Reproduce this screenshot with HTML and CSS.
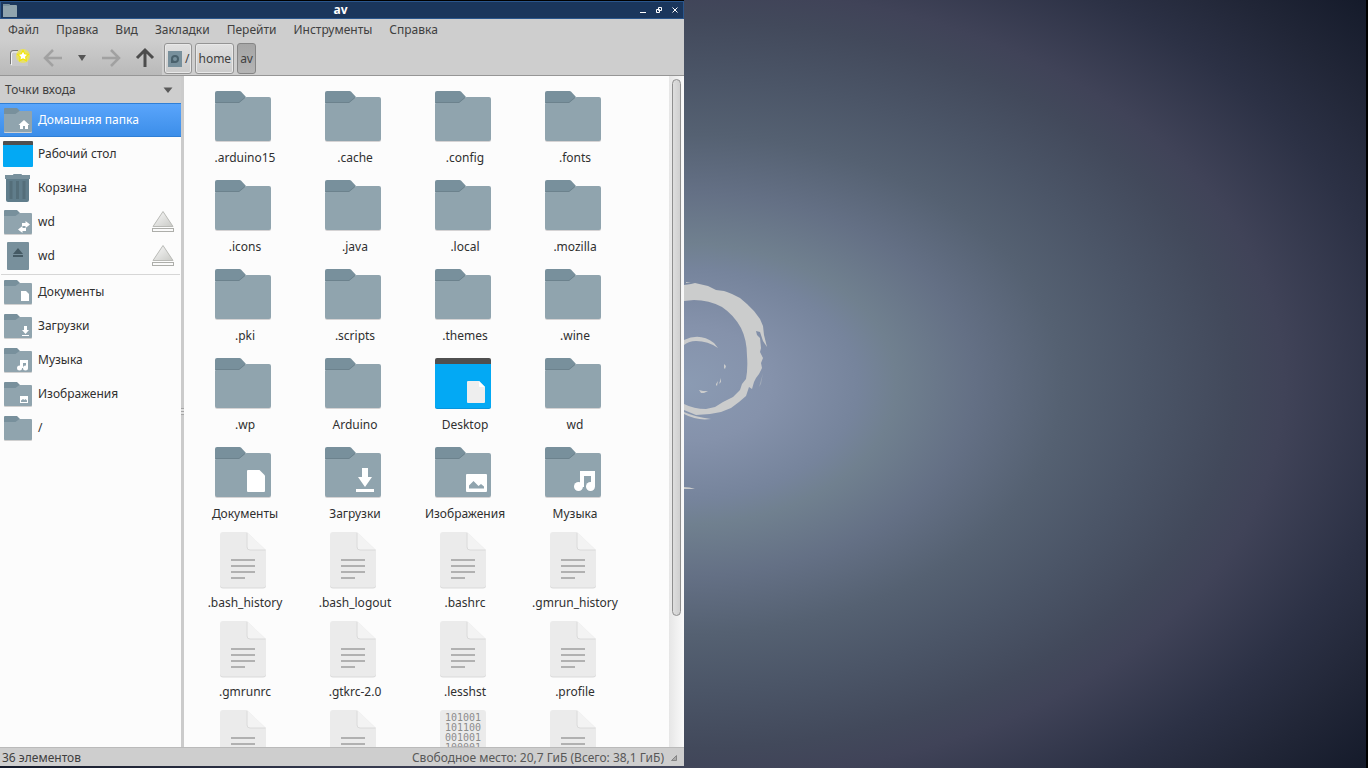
FILE: index.html
```
<!DOCTYPE html>
<html lang="ru">
<head>
<meta charset="utf-8">
<title>av</title>
<link rel="stylesheet" href="styles.css">
</head>
<body>
<svg class="defs" aria-hidden="true">
  <defs>
    <linearGradient id="metal" x1="0" y1="0" x2="1" y2="1"><stop offset="0" stop-color="#fafafa"/><stop offset="1" stop-color="#c9cac6"/></linearGradient>
    <symbol id="folder" viewBox="0 0 68 64">
      <path d="M4 54v2a2 2 0 0 0 2 2h52a2 2 0 0 0 2-2V54z" fill="#d5d3d4"/>
      <path d="M4 9a2 2 0 0 1 2-2h22.500q1 0 1.700.7L35 13l-4 6H4z" fill="#78909c"/>
      <path d="M4 20q0-1.500 1.500-1.500H28q1 0 1.700-.7l4.300-4.100q.7-.7 1.700-.7H58a2 2 0 0 1 2 2v40a2 2 0 0 1-2 2H6a2 2 0 0 1-2-2z" fill="#90a4ae"/>
      <path d="M4.500 18.500H28l6-5" fill="none" stroke="#6c828d"/>
    </symbol>
    <symbol id="file" viewBox="0 0 68 64">
      <path d="M9 55v1.500a3 3 0 0 0 3 3h40a3 3 0 0 0 3-3V21H36z" fill="#d9d9d9"/>
      <path d="M9 6a3 3 0 0 1 3-3h24l19 18v34.500a3 3 0 0 1-3 3H12a3 3 0 0 1-3-3z" fill="#ebebeb"/>
      <path d="M36 3l18.500 18H39a3 3 0 0 1-3-3z" fill="#f3f3f3"/>
      <path d="M36 4v14a3 3 0 0 0 3 3h15.500" fill="none" stroke="#dadada"/>
      <path d="M20 31h24M20 37h24M20 43h24M20 49h14" stroke="#b1b1b1" stroke-width="2"/>
    </symbol>
    <symbol id="binary" viewBox="0 0 68 64">
      <rect x="9" y="3" width="46" height="57" rx="3" fill="#ebebeb"/>
      <g class="digits" text-anchor="middle"><text x="32" y="14">101001</text><text x="32" y="24">101100</text><text x="32" y="34">001001</text><text x="32" y="44">100001</text></g>
    </symbol>
    <symbol id="desktop" viewBox="0 0 68 64">
      <path d="M4 54v2a2 2 0 0 0 2 2h52a2 2 0 0 0 2-2V54z" fill="#0794dc"/>
      <path d="M4 12h56v43a2 2 0 0 1-2 2H6a2 2 0 0 1-2-2z" fill="#03a9f4"/>
      <path d="M4 13V9a2 2 0 0 1 2-2h52a2 2 0 0 1 2 2v4z" fill="#4f4f4f"/>
      <path d="M36 31a1 1 0 0 1 1-1h11l6 6v15a1 1 0 0 1-1 1H37a1 1 0 0 1-1-1z" fill="#eee"/><path d="M48 30l6 6h-5q-1 0-1-1z" fill="#fff"/>
    </symbol>
    <symbol id="docs" viewBox="0 0 68 64"><use href="#folder"/><path d="M36 31a1 1 0 0 1 1-1h11.500l5.500 5.500V51a1 1 0 0 1-1 1H37a1 1 0 0 1-1-1z" fill="#fff"/></symbol>
    <symbol id="downloads" viewBox="0 0 68 64"><use href="#folder"/><path d="M41 28h6v9h4l-7 10-7-10h4zM35 49h18v3H35z" fill="#fff"/></symbol>
    <symbol id="pictures" viewBox="0 0 68 64"><use href="#folder"/><rect x="35" y="34" width="21" height="18" rx="1" fill="#fff"/><path d="M38 48.500v-3l4.500-4.500 5 5 2.500-2 3 2.500v2z" fill="#90a4ae"/></symbol>
    <symbol id="music" viewBox="0 0 68 64"><use href="#folder"/><path d="M39 31h15v15.500h-4V36h-7v11h-4z" fill="#fff"/><circle cx="37.500" cy="46.500" r="4.500" fill="#fff"/><circle cx="49.500" cy="46.500" r="4.500" fill="#fff"/></symbol>
    <symbol id="s-folder" viewBox="0 0 32 32">
      <path d="M2 27v1a1 1 0 0 0 1 1h26a1 1 0 0 0 1-1v-1z" fill="#d0d0d0"/>
      <path d="M2 5a1 1 0 0 1 1-1h12l3 3v3H2z" fill="#78909c"/>
      <path d="M2 10h11.500l4-3H29a1 1 0 0 1 1 1v19a1 1 0 0 1-1 1H3a1 1 0 0 1-1-1z" fill="#90a4ae"/>
    </symbol>
    <symbol id="s-home" viewBox="0 0 32 32"><use href="#s-folder"/><path d="M22 16l5.500 5H26v4h-3v-3h-2v3h-3v-4h-1.500z" fill="#fff"/></symbol>
    <symbol id="s-desktop" viewBox="0 0 32 32"><path d="M1 5V4a1 1 0 0 1 1-1h28a1 1 0 0 1 1 1v3H1z" fill="#4f4f4f"/><path d="M1 7h30v21a1 1 0 0 1-1 1H2a1 1 0 0 1-1-1z" fill="#03a9f4"/></symbol>
    <symbol id="s-trash" viewBox="0 0 32 32"><path d="M4 7h23v21a2 2 0 0 1-2 2H6a2 2 0 0 1-2-2z" fill="#607d8b"/><path d="M3 3h8q0-1 1-1h7q1 0 1 1h8v4H3z" fill="#78909c"/><path d="M9 9v18M15.500 9v18M22 9v18" stroke="#546e7a" stroke-width="3"/></symbol>
    <symbol id="s-net" viewBox="0 0 32 32"><use href="#s-folder"/><path d="M23.500 15l4.500 3.500-4.500 3.500v-2H20v-3h3.500zM20.500 20l-4.500 3.500 4.500 3.500v-2H24v-3h-3.500z" fill="#fff"/></symbol>
    <symbol id="s-drive" viewBox="0 0 32 32"><rect x="5" y="2" width="22" height="28" rx="1" fill="#78909c"/><path d="M16 8l5 6H11zM11 15h10v2H11z" fill="#455a64"/></symbol>
    <symbol id="s-docs" viewBox="0 0 32 32"><use href="#s-folder"/><path d="M19 15h5l3 3v7h-8z" fill="#fff"/></symbol>
    <symbol id="s-down" viewBox="0 0 32 32"><use href="#s-folder"/><path d="M22 16h3v4h2l-3.500 4-3.500-4h2zM20 25h7v1h-7z" fill="#fff"/></symbol>
    <symbol id="s-music" viewBox="0 0 32 32"><use href="#s-folder"/><path d="M18 16h8v8h-2v-5h-3v5h-3z" fill="#fff"/><circle cx="17.500" cy="24" r="2.500" fill="#fff"/><circle cx="23.500" cy="24" r="2.500" fill="#fff"/></symbol>
    <symbol id="s-pics" viewBox="0 0 32 32"><use href="#s-folder"/><path d="M18 18h8v7h-8z" fill="#fff"/><path d="M19 24v-1.500l2-1.500 1.500 1 1-1 1.500 1.500V24z" fill="#90a4ae"/></symbol>
    <symbol id="eject" viewBox="0 0 24 24"><path d="M12 1.500L22 16.500H2z" fill="url(#metal)" stroke="#b9bab6"/><rect x="1.500" y="18.500" width="21" height="3" fill="#fafafa" stroke="#adaeaa"/></symbol>
  </defs>
</svg>
<main class="screen">
  <section class="window">
    <header class="titlebar">
      <svg class="title-icon" viewBox="0 0 16 16"><path d="M1 2h6l1 1h6a1 1 0 0 1 1 1v11H1z" fill="#90a4ae"/><path d="M1 2h6l1 1-1 1H1z" fill="#78909c"/></svg>
      <h1>av</h1>
      <div class="controls">
        <button aria-label="Свернуть"><svg viewBox="0 0 8 8"><path d="M1 6.500h6" stroke="#fff"/></svg></button>
        <button aria-label="Развернуть"><svg viewBox="0 0 8 8"><path d="M3.500 1.500h3v3h-3zM1.500 3.500h3v3h-3z" fill="none" stroke="#fff"/></svg></button>
        <button aria-label="Закрыть"><svg viewBox="0 0 8 8"><path d="M1.500 1.500l5 5M6.500 1.500l-5 5" stroke="#fff"/></svg></button>
      </div>
    </header>
    <nav class="menubar">
      <button>Файл</button><button>Правка</button><button>Вид</button><button>Закладки</button><button>Перейти</button><button>Инструменты</button><button>Справка</button>
    </nav>
    <div class="toolbar">
      <div class="tools">
        <button class="tool" aria-label="Новая вкладка"><svg width="24" height="24" viewBox="0 0 24 24"><path d="M3.500 20V7q0-2.500 2.500-2.500h15V20z" fill="#cfcfcf" opacity=".6"/><path d="M3.500 18V7q0-2.500 2.500-2.500h5" fill="none" stroke="#777"/><path d="M4.500 19V8q0-2 2-2H11" fill="none" stroke="#f4f4f4"/><circle cx="16" cy="10" r="7" fill="#f0e64a" opacity=".75"/><path d="M16 4.500l1.700 3.300 3.600.6-2.600 2.500.6 3.700-3.300-1.700-3.300 1.700.6-3.700-2.600-2.500 3.600-.6z" fill="#fff" stroke="#f2e500" stroke-width="1.200"/></svg></button>
        <button class="tool" aria-label="Назад"><svg width="24" height="24" viewBox="0 0 24 24"><path d="M21 12H5M12 4l-8 8 8 8" fill="none" stroke="#a1a1a1" stroke-width="2.500"/></svg></button>
        <button class="tool history" aria-label="История"><svg width="8" height="6" viewBox="0 0 8 6"><path d="M0 0h8L4 6z" fill="#555"/></svg></button>
        <button class="tool" aria-label="Вперёд"><svg width="24" height="24" viewBox="0 0 24 24"><path d="M3 12h16M12 4l8 8-8 8" fill="none" stroke="#a1a1a1" stroke-width="2.500"/></svg></button>
        <button class="tool" aria-label="Вверх"><svg width="24" height="24" viewBox="0 0 24 24"><path d="M12 21V5M4 12l8-8 8 8" fill="none" stroke="#4c4c4c" stroke-width="3"/></svg></button>
      </div>
      <div class="path">
        <button><svg width="16" height="16" viewBox="0 0 16 16"><path d="M1 0h14v16H1z" fill="#78909c"/><path d="M4 12V8a4 4 0 1 1 4 4z" fill="#4a616c"/><circle cx="8" cy="8" r="2" fill="#78909c"/></svg>/</button>
        <button>home</button>
        <button class="pressed">av</button>
      </div>
    </div>
    <div class="body">
      <aside class="sidebar">
        <button class="side-head">Точки входа<svg width="10" height="6" viewBox="0 0 10 6"><path d="M.5.500h9L5 6z" fill="#5a5a5a"/></svg></button>
        <ul class="places">
          <li class="selected"><svg><use href="#s-home"/></svg><span>Домашняя папка</span></li>
          <li><svg><use href="#s-desktop"/></svg><span>Рабочий стол</span></li>
          <li><svg><use href="#s-trash"/></svg><span>Корзина</span></li>
          <li><svg><use href="#s-net"/></svg><span>wd</span><button aria-label="Извлечь"><svg><use href="#eject"/></svg></button></li>
          <li><svg><use href="#s-drive"/></svg><span>wd</span><button aria-label="Извлечь"><svg><use href="#eject"/></svg></button></li>
        </ul>
        <ul class="places bookmarks">
          <li><svg><use href="#s-docs"/></svg><span>Документы</span></li>
          <li><svg><use href="#s-down"/></svg><span>Загрузки</span></li>
          <li><svg><use href="#s-music"/></svg><span>Музыка</span></li>
          <li><svg><use href="#s-pics"/></svg><span>Изображения</span></li>
          <li><svg><use href="#s-folder"/></svg><span>/</span></li>
        </ul>
      </aside>
      <div class="splitter"><i></i></div>
      <ul class="files">
        <li><svg><use href="#folder"/></svg>.arduino15</li>
        <li><svg><use href="#folder"/></svg>.cache</li>
        <li><svg><use href="#folder"/></svg>.config</li>
        <li><svg><use href="#folder"/></svg>.fonts</li>
        <li><svg><use href="#folder"/></svg>.icons</li>
        <li><svg><use href="#folder"/></svg>.java</li>
        <li><svg><use href="#folder"/></svg>.local</li>
        <li><svg><use href="#folder"/></svg>.mozilla</li>
        <li><svg><use href="#folder"/></svg>.pki</li>
        <li><svg><use href="#folder"/></svg>.scripts</li>
        <li><svg><use href="#folder"/></svg>.themes</li>
        <li><svg><use href="#folder"/></svg>.wine</li>
        <li><svg><use href="#folder"/></svg>.wp</li>
        <li><svg><use href="#folder"/></svg>Arduino</li>
        <li><svg><use href="#desktop"/></svg>Desktop</li>
        <li><svg><use href="#folder"/></svg>wd</li>
        <li><svg><use href="#docs"/></svg>Документы</li>
        <li><svg><use href="#downloads"/></svg>Загрузки</li>
        <li><svg><use href="#pictures"/></svg>Изображения</li>
        <li><svg><use href="#music"/></svg>Музыка</li>
        <li><svg><use href="#file"/></svg>.bash_history</li>
        <li><svg><use href="#file"/></svg>.bash_logout</li>
        <li><svg><use href="#file"/></svg>.bashrc</li>
        <li><svg><use href="#file"/></svg>.gmrun_history</li>
        <li><svg><use href="#file"/></svg>.gmrunrc</li>
        <li><svg><use href="#file"/></svg>.gtkrc-2.0</li>
        <li><svg><use href="#file"/></svg>.lesshst</li>
        <li><svg><use href="#file"/></svg>.profile</li>
        <li><svg><use href="#file"/></svg></li>
        <li><svg><use href="#file"/></svg></li>
        <li><svg><use href="#binary"/></svg></li>
        <li><svg><use href="#file"/></svg></li>
      </ul>
      <div class="scrollbar"><div class="thumb"></div></div>
    </div>
    <footer class="statusbar">
      <span>36 элементов</span>
      <span class="space">Свободное место: 20,7 ГиБ (Всего: 38,1 ГиБ)</span>
      <svg width="8" height="8" viewBox="0 0 8 8"><path d="M1.500 6.500l5-5v5z" fill="#aaa" stroke="#858585"/></svg>
    </footer>
  </section>
  <svg class="swirl" viewBox="0 0 100 230" width="100" height="230">
    <g fill="#cbcccc">
      <path d="M0 15L7 14 11 13 24 16 32 20 40 21 43 22 48 24 56 28 63 34 70 41 76 49 79 56 80 65 83 77 79 71 76 62 72 61 73 65 76 68 77 78 76 82 79 88 77 93 78 98 75 104 72 108 70 112 68 119 65 117 62 126 55 132 47 138 37 142 26 144 12 145 0 140V134Q10 139 22 139L31 137 39 132 49 127 56 120 58 114 62 109Q64 98 63 86 63 70 57 58 50 45 38 37 25 30 10 30L0 31Z"/>
      <path d="M0 70Q16 62 30 73L34 78Q24 71 12 71 5 71 0 75Z"/>
      <path d="M0 142Q11 147 27 149 13 151 0 144ZM0 217q6 0 11 2l-11 0zM15 120l4 1 5 0-4 2h-3zM40 94l2 2-1 3-1-1zM32 114l2-3-1 5-1-1zM37 108l-2 6 2-2zM2 12l5 1-5 0z"/>
      <path d="M79 103l-4 14 2-3z" opacity=".4"/>
    </g>
  </svg>
</main>
</body>
</html>
```
FILE: styles.css
```
* { box-sizing: border-box; }
body {
  margin: 0;
  font: 12px/16px "Noto Sans", "Open Sans", sans-serif;
  color: #303030;
}
button {
  padding: 0;
  border: 0;
  background: none;
  font: inherit;
  color: inherit;
}
svg { display: block; flex: none; }
ul { margin: 0; padding: 0; list-style: none; }
.defs { position: absolute; width: 0; height: 0; }

.screen {
  display: flex;
  height: 100vh;
  padding-bottom: 2px;
  overflow: hidden;
  border-right: 2px solid #000;
  background: radial-gradient(ellipse 967px 640px at 684px 384px, #8b9bb3 0%, #8592ab 9%, #76849c 18%, #70808f 22%, #647085 30%, #556172 39%, #4b5567 48%, #42495b 57%, #404358 62%, #2c3145 74%, #212637 83%, #141a2a 93%);
}
.swirl { margin-top: 270px; }

.window {
  display: flex;
  flex-direction: column;
  flex: 0 0 calc(50% + 1px);
  border-top: 1px solid #000;
  background: #cecece;
}

.titlebar {
  display: grid;
  grid-template-columns: 1fr auto 1fr;
  align-items: center;
  height: 18px;
  padding: 0 4px 0 1px;
  border: 1px solid #2a568c;
  background: #1a365c;
}
.title-icon { width: 16px; height: 16px; }
.titlebar h1 {
  margin: 0;
  font: bold 12px/16px "Open Sans", sans-serif;
  color: #fff;
}
.controls { display: flex; justify-content: flex-end; gap: 8px; }
.controls svg { width: 8px; height: 8px; }

.menubar {
  display: flex;
  gap: 17px;
  padding: 3px 8px 2px;
  color: #404040;
}

.toolbar {
  display: flex;
  height: 36px;
  border-bottom: 1px solid #969696;
}
.tools {
  display: flex;
  align-items: center;
  width: 162px;
  padding-left: 2px;
  background: linear-gradient(#cecece, #b9b9b9);
}
.tool { display: flex; justify-content: center; width: 34px; }
.history { width: 25px; }
.path { display: flex; gap: 3px; padding: 3px 2px 1px; }
.path button {
  display: flex;
  align-items: center;
  gap: 2px;
  padding: 0 2px;
  border: 1px solid #949494;
  border-radius: 3px;
  background: linear-gradient(#e0e0e0, #cbcbcb);
  box-shadow: inset 0 0 0 1px #e8e8e8;
  color: #404040;
}
.path .pressed {
  border-color: #858585;
  background: linear-gradient(#a5a5a5, #b5b5b5);
  box-shadow: none;
}

.body { display: flex; flex: 1; min-height: 0; background: #fcfcfc; }
.sidebar { width: 181px; }
.side-head {
  display: flex;
  align-items: center;
  justify-content: space-between;
  width: 100%;
  height: 27px;
  padding: 0 8px 0 5px;
  background: #cecece;
  color: #404040;
}
.places li {
  display: flex;
  align-items: center;
  gap: 4px;
  height: 34px;
  padding: 0 6px 0 2px;
}
.places svg { width: 32px; height: 32px; }
.places span { flex: 1; }
.places button svg { width: 24px; height: 24px; }
.places .selected {
  border: solid #2f7fd6;
  border-width: 1px 0;
  background: linear-gradient(#5aa5fb, #3c8ee9);
  color: #fff;
}
.bookmarks { margin: 1px 1px 0; border-top: 1px solid #d6d6d6; }
.bookmarks li { padding-left: 1px; }
.splitter {
  display: flex;
  align-items: center;
  width: 3px;
  background: #cbcbcb;
}
.splitter i {
  width: 3px;
  height: 7px;
  background: repeating-linear-gradient(#a5a5a5 0 1px, #dedede 1px 3px);
}
.files {
  display: grid;
  flex: 1;
  grid-template-columns: repeat(auto-fill, 110px);
  grid-auto-rows: 89px;
  padding: 8px 6px 0;
  overflow: hidden;
}
.files li {
  display: flex;
  flex-direction: column;
  align-items: center;
  gap: 2px;
}
.files svg { width: 68px; height: 64px; }
.digits { font: 10px "DejaVu Sans Mono", monospace; fill: #8c8c8c; }
.scrollbar {
  width: 15px;
  padding: 3px 3px;
  background: linear-gradient(90deg, #e6e6e6, #fafafa);
}
.thumb {
  height: 80.8%;
  border: 1px solid #8f8f8f;
  border-radius: 5px;
  background: linear-gradient(90deg, #dedede, #cfcfcf);
}

.statusbar {
  display: flex;
  align-items: center;
  gap: 6px;
  height: 19px;
  padding: 1px 6px 0 2px;
  border-top: 1px solid #bababa;
  color: #404040;
}
.space { margin-left: auto; color: #585858; }
```
